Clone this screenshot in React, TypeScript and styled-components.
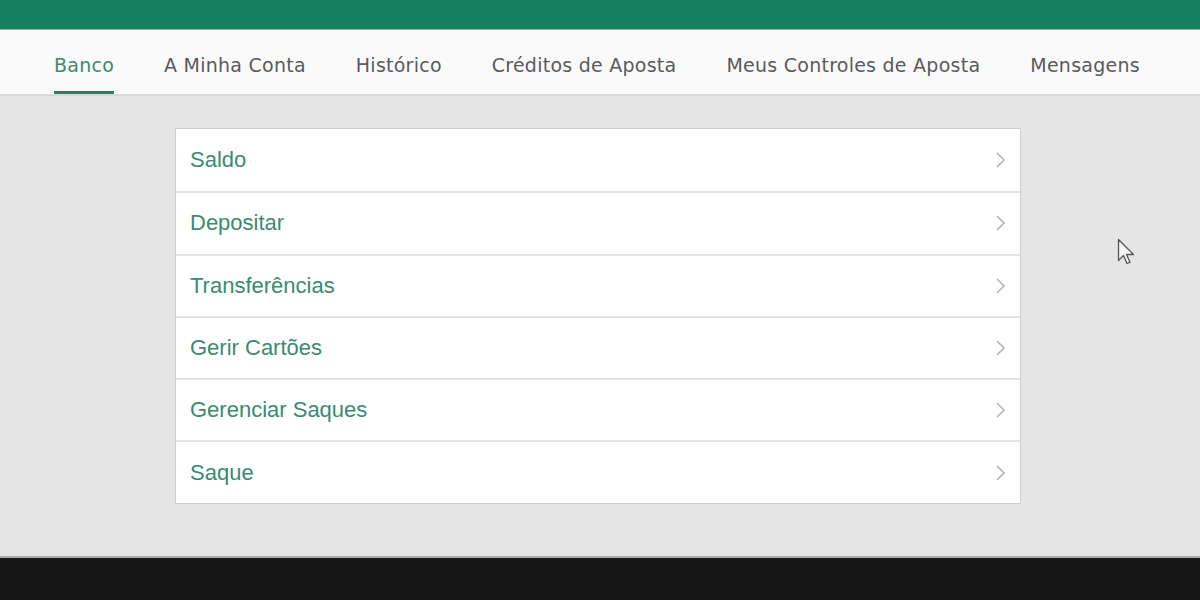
import React, { FC } from "react";
import styled, { createGlobalStyle } from "styled-components";

const GlobalStyle = createGlobalStyle`
  html, body {
    margin: 0;
    padding: 0;
    background: #161616;
  }
  * {
    box-sizing: border-box;
  }
`;

const Page = styled.div`
  width: 1200px;
  height: 600px;
  display: flex;
  flex-direction: column;
  overflow: hidden;
  position: relative;
`;

const TopBar = styled.div`
  height: 30px;
  background: #167f5e;
  border-bottom: 1px solid #7fb5a2;
`;

const Nav = styled.nav`
  height: 66px;
  background: #fafafa;
  border-bottom: 2px solid #d9d9d9;
  display: flex;
  align-items: stretch;
  padding-left: 54px;
  gap: 50px;
`;

const Tab = styled.div<{ $active?: boolean }>`
  display: flex;
  align-items: center;
  font-family: "DejaVu Sans", Verdana, sans-serif;
  font-size: 19px;
  letter-spacing: 0.25px;
  color: ${(p) => (p.$active ? "#3f8a71" : "#5a5a5a")};
  border-bottom: 3px solid ${(p) => (p.$active ? "#357a63" : "transparent")};
  padding-top: 8px;
`;

const Content = styled.main`
  flex: 1;
  background: #e5e5e5;
  padding: 32px 4px 0 0;
  border-bottom: 2px solid #a9a9a9;
`;

const Card = styled.ul`
  list-style: none;
  margin: 0 auto;
  padding: 0;
  width: 846px;
  background: #fff;
  border: 1px solid #cfcfcf;
`;

const Row = styled.li`
  height: 62.3px;
  display: flex;
  align-items: center;
  justify-content: space-between;
  padding: 0 14px 0 14px;
  border-top: 2px solid #e4e4e4;
  &:first-child {
    border-top: none;
  }
`;

const Label = styled.span`
  font-family: "Liberation Sans", Arial, sans-serif;
  font-size: 22px;
  color: #3a8b6f;
`;

const Chevron: FC = () => (
  <svg width="12" height="18" viewBox="0 0 12 18">
    <path d="M3 2l7 7-7 7" fill="none" stroke="#b4b4b4" strokeWidth="1.6" />
  </svg>
);

const Footer = styled.div`
  height: 42px;
  background: #161616;
`;

const Cursor = styled.svg`
  position: absolute;
  left: 1117px;
  top: 238px;
`;

const tabs = [
  "Banco",
  "A Minha Conta",
  "Histórico",
  "Créditos de Aposta",
  "Meus Controles de Aposta",
  "Mensagens",
];

const items = [
  "Saldo",
  "Depositar",
  "Transferências",
  "Gerir Cartões",
  "Gerenciar Saques",
  "Saque",
];

const App: FC = () => {
  return (
    <>
      <GlobalStyle />
      <Page>
        <TopBar />
        <Nav>
          {tabs.map((t, i) => (
            <Tab key={t} $active={i === 0}>
              {t}
            </Tab>
          ))}
        </Nav>
        <Content>
          <Card>
            {items.map((item) => (
              <Row key={item}>
                <Label>{item}</Label>
                <Chevron />
              </Row>
            ))}
          </Card>
        </Content>
        <Footer />
        <Cursor width="20" height="28" viewBox="0 0 20 28">
          <path
            d="M1.5 1.5v21l5-5 3.5 8 3-1.3-3.5-7.7h7z"
            fill="#f4f4f4"
            stroke="#555"
            strokeWidth="1.3"
            strokeLinejoin="round"
          />
        </Cursor>
      </Page>
    </>
  );
};

export default App;
